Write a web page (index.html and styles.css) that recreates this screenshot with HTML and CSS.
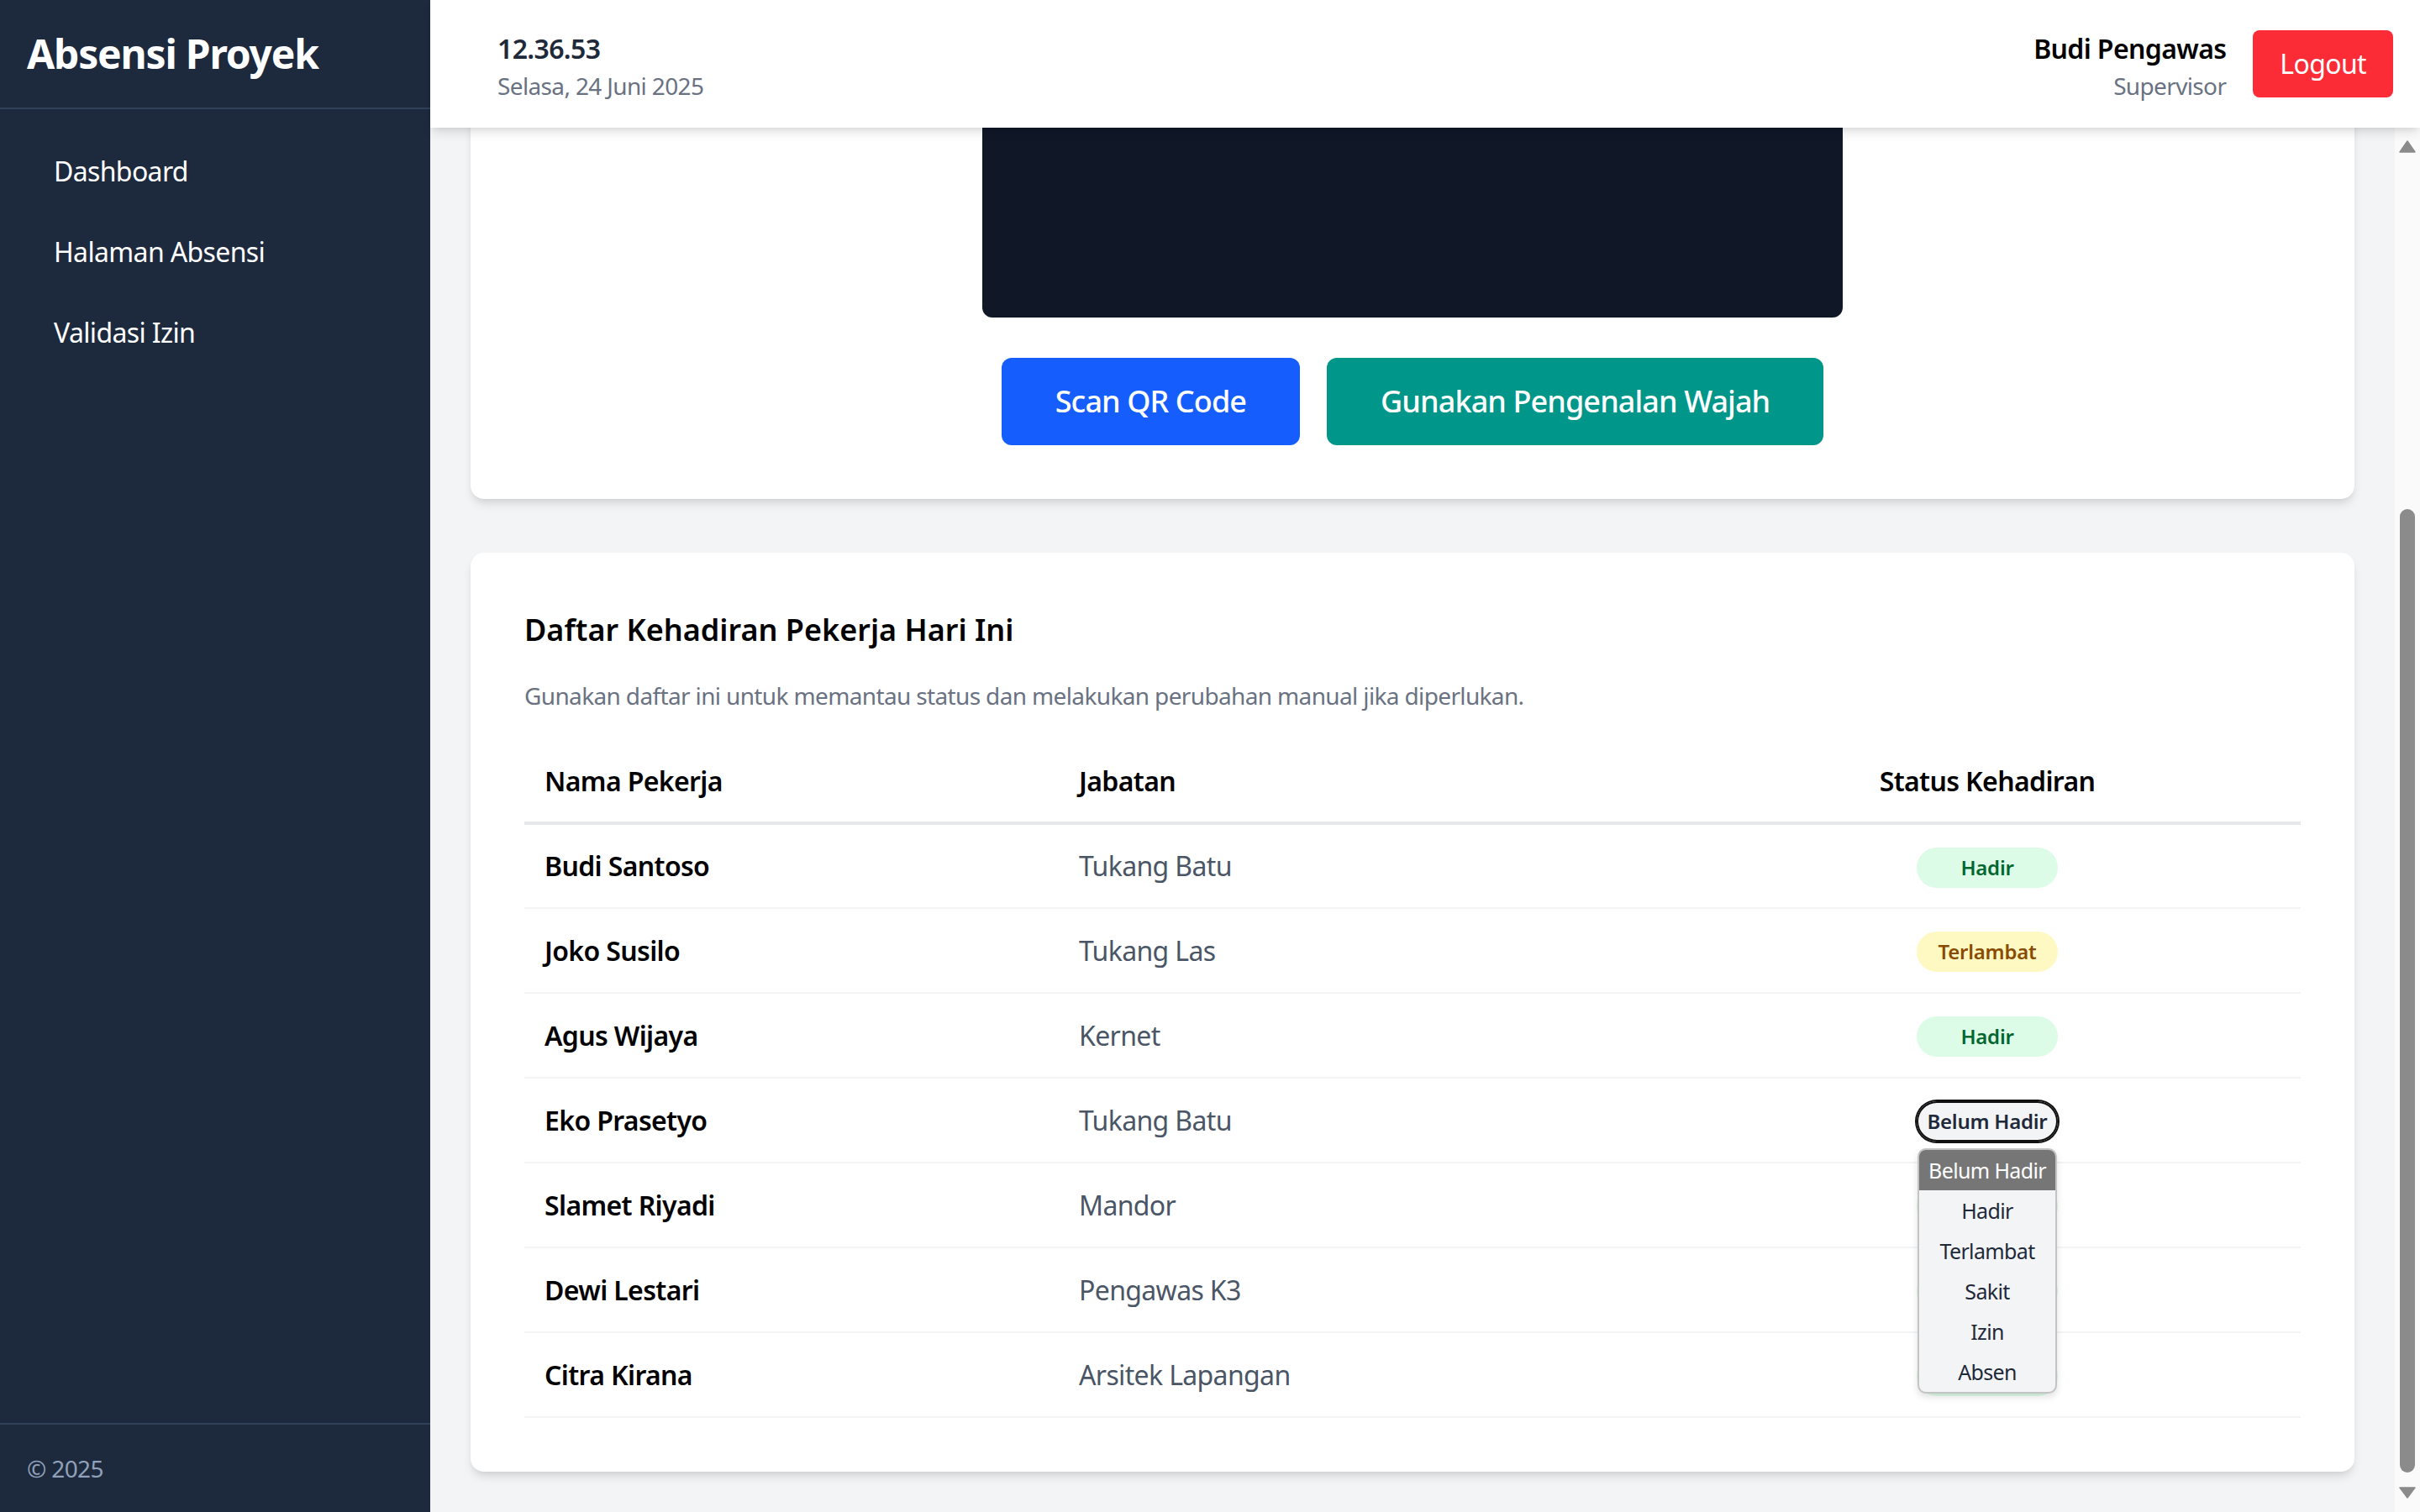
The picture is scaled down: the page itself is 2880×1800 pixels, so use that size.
FILE: index.html
```html
<!DOCTYPE html>
<html lang="id">
<head>
<meta charset="utf-8">
<title>Absensi Proyek</title>
<link rel="stylesheet" href="styles.css">
</head>
<body>
<div class="app">
  <aside class="sidebar">
    <div class="brand">Absensi Proyek</div>
    <nav class="nav">
      <a class="nav-link" href="#">Dashboard</a>
      <a class="nav-link" href="#">Halaman Absensi</a>
      <a class="nav-link" href="#">Validasi Izin</a>
    </nav>
    <div class="sidebar-footer">© 2025</div>
  </aside>
  <div class="content">
    <header class="topbar">
      <div class="clock">
        <div class="time">12.36.53</div>
        <div class="date">Selasa, 24 Juni 2025</div>
      </div>
      <div class="user">
        <div class="user-info">
          <div class="user-name">Budi Pengawas</div>
          <div class="user-role">Supervisor</div>
        </div>
        <button class="logout" type="button">Logout</button>
      </div>
    </header>
    <div class="viewport">
      <main class="main" id="main">
        <section class="card scan-card">
          <div class="camera"></div>
          <div class="actions">
            <button class="btn btn-blue" type="button">Scan QR Code</button>
            <button class="btn btn-teal" type="button">Gunakan Pengenalan Wajah</button>
          </div>
        </section>
        <section class="card list-card">
          <h2 class="card-title">Daftar Kehadiran Pekerja Hari Ini</h2>
          <p class="card-desc list-desc">Gunakan daftar ini untuk memantau status dan melakukan perubahan manual jika diperlukan.</p>
          <table class="table">
            <colgroup>
              <col class="col-name">
              <col class="col-role">
              <col class="col-status">
            </colgroup>
            <thead>
              <tr>
                <th>Nama Pekerja</th>
                <th>Jabatan</th>
                <th class="center">Status Kehadiran</th>
              </tr>
            </thead>
            <tbody>
              <tr>
                <td class="name">Budi Santoso</td>
                <td class="role">Tukang Batu</td>
                <td class="center"><span class="badge badge-green">Hadir</span></td>
              </tr>
              <tr>
                <td class="name">Joko Susilo</td>
                <td class="role">Tukang Las</td>
                <td class="center"><span class="badge badge-yellow">Terlambat</span></td>
              </tr>
              <tr>
                <td class="name">Agus Wijaya</td>
                <td class="role">Kernet</td>
                <td class="center"><span class="badge badge-green">Hadir</span></td>
              </tr>
              <tr>
                <td class="name">Eko Prasetyo</td>
                <td class="role">Tukang Batu</td>
                <td class="center">
                  <span class="select-wrap">
                    <span class="badge badge-gray focused">Belum Hadir</span>
                    <span class="popup">
                      <span class="option selected">Belum Hadir</span>
                      <span class="option">Hadir</span>
                      <span class="option">Terlambat</span>
                      <span class="option">Sakit</span>
                      <span class="option">Izin</span>
                      <span class="option">Absen</span>
                    </span>
                  </span>
                </td>
              </tr>
              <tr>
                <td class="name">Slamet Riyadi</td>
                <td class="role">Mandor</td>
                <td class="center"><span class="badge badge-green covered"><span class="badge-text">Hadir</span></span></td>
              </tr>
              <tr>
                <td class="name">Dewi Lestari</td>
                <td class="role">Pengawas K3</td>
                <td class="center"><span class="badge badge-green covered"><span class="badge-text">Hadir</span></span></td>
              </tr>
              <tr>
                <td class="name">Citra Kirana</td>
                <td class="role">Arsitek Lapangan</td>
                <td class="center"><span class="badge badge-green covered"><span class="badge-text">Hadir</span></span></td>
              </tr>
            </tbody>
          </table>
        </section>
      </main>
      <div class="scrollbar" aria-hidden="true">
        <span class="sb-btn sb-up">
          <svg width="30" height="34" viewBox="0 0 30 34"><path d="M6 29 L15 16 L24 29 Z" fill="#8b8b8b" stroke="#8b8b8b" stroke-width="1.5" stroke-linejoin="round"/></svg>
        </span>
        <span class="sb-track"><span class="sb-thumb"></span></span>
        <span class="sb-btn sb-down">
          <svg width="30" height="34" viewBox="0 0 30 34"><path d="M6 5 L15 17 L24 5 Z" fill="#8b8b8b" stroke="#8b8b8b" stroke-width="1.5" stroke-linejoin="round"/></svg>
        </span>
      </div>
    </div>
  </div>
</div>
<script src="script.js"></script>
</body>
</html>
```

FILE: styles.css
```css
* { box-sizing: border-box; }
html, body { margin: 0; padding: 0; height: 100%; }
body {
  font-family: "Noto Sans", "Open Sans", "DejaVu Sans", sans-serif;
  font-size: 32px;
  line-height: 48px;
  letter-spacing: -0.02em;
  color: #101828;
  overflow: hidden;
}
.app { display: flex; height: 100vh; }

/* Sidebar */
.sidebar {
  width: 512px;
  flex: none;
  background: #1d293d;
  color: #ffffff;
  display: flex;
  flex-direction: column;
}
.brand {
  padding: 32px;
  font-size: 48px;
  line-height: 64px;
  font-weight: 700;
  letter-spacing: -0.025em;
  border-bottom: 2px solid #314158;
}
.nav {
  flex: 1;
  padding: 34px 32px 32px;
  display: flex;
  flex-direction: column;
  gap: 16px;
}
.nav-link {
  display: block;
  padding: 16px 32px;
  color: #ffffff;
  text-decoration: none;
  font-size: 32px;
  line-height: 48px;
  border-radius: 12px;
}
.sidebar-footer {
  padding: 32px;
  border-top: 2px solid #314158;
  font-size: 28px;
  line-height: 40px;
  color: #90a1b9;
}

/* Content column */
.content {
  flex: 1;
  min-width: 0;
  display: flex;
  flex-direction: column;
  background: #f3f4f6;
}
.topbar {
  position: relative;
  z-index: 10;
  flex: none;
  background: #ffffff;
  display: flex;
  justify-content: space-between;
  align-items: center;
  padding: 34px 32px 30px 80px;
  box-shadow: 0 8px 12px -2px rgba(0,0,0,0.1), 0 4px 8px -4px rgba(0,0,0,0.1);
}
.time { font-size: 32px; line-height: 48px; font-weight: 600; color: #1e2939; }
.date { font-size: 28px; line-height: 40px; color: #6a7282; }
.user { display: flex; align-items: center; gap: 32px; }
.user-info { text-align: right; }
.user-name { font-size: 32px; line-height: 48px; font-weight: 600; color: #000000; }
.user-role { font-size: 28px; line-height: 40px; color: #6a7282; }
.logout {
  font-family: inherit;
  font-size: 32px;
  line-height: 48px;
  letter-spacing: -0.02em;
  color: #ffffff;
  background: #fb2c36;
  border: 0;
  border-radius: 8px;
  padding: 16px 32px;
  margin-top: -4px;
}

/* Scroll area with its scrollbar */
.viewport {
  flex: 1;
  min-height: 0;
  display: flex;
}
.main {
  flex: 1;
  min-width: 0;
  overflow: hidden;
  padding: 48px;
}
.scrollbar {
  flex: none;
  width: 30px;
  background: #fafafa;
  display: flex;
  flex-direction: column;
}
.sb-btn { display: block; height: 34px; flex: none; }
.sb-btn svg { display: block; }
.sb-track {
  flex: 1;
  display: flex;
  flex-direction: column;
  justify-content: flex-end;
  padding: 0 6px 13px;
}
.sb-thumb {
  display: block;
  height: 1147px;
  background: #8b8b8b;
  border-radius: 9px;
}

/* Cards */
.card {
  background: #ffffff;
  border-radius: 16px;
  padding: 64px;
  box-shadow: 0 8px 12px -2px rgba(0,0,0,0.1), 0 4px 8px -4px rgba(0,0,0,0.1);
}
.card + .card { margin-top: 64px; }
.card-title {
  margin: 0 0 30px;
  font-size: 36px;
  line-height: 56px;
  font-weight: 600;
  letter-spacing: 0;
  color: #000000;
}
.card-desc {
  margin: 0;
  font-size: 28px;
  line-height: 40px;
  color: #6a7282;
}
.list-desc { margin-bottom: 34px; }

.camera {
  width: 1024px;
  height: 576px;
  margin: 0 auto;
  background: #101828;
  border-radius: 12px;
}
.actions {
  display: flex;
  justify-content: center;
  gap: 32px;
  margin-top: 48px;
}
.btn {
  font-family: inherit;
  font-size: 36px;
  line-height: 56px;
  font-weight: 500;
  letter-spacing: -0.025em;
  color: #ffffff;
  border: 0;
  border-radius: 12px;
  padding: 24px 64px;
}
.btn-blue { background: #155dfc; }
.btn-teal { background: #009689; }

/* Table */
.table {
  width: 100%;
  border-collapse: collapse;
  table-layout: fixed;
}
.col-name { width: 636px; }
.col-role { width: 732px; }
.table th {
  text-align: left;
  padding: 24px;
  font-size: 32px;
  line-height: 48px;
  font-weight: 600;
  color: #000000;
  border-bottom: 4px solid #e5e7eb;
}
.table td {
  padding: 0 24px;
  height: 101px;
  vertical-align: middle;
  border-bottom: 2px solid #f3f4f6;
}
.table .center { text-align: center; }
.name { font-weight: 600; color: #000000; }
.role { color: #4a5565; }

.badge {
  display: inline-flex;
  align-items: center;
  justify-content: center;
  width: 168px;
  height: 48px;
  border-radius: 9999px;
  font-size: 24px;
  line-height: 32px;
  font-weight: 600;
  letter-spacing: -0.01em;
  vertical-align: middle;
}
.badge-green { background: #dcfce7; color: #016630; }
.badge-yellow { background: #fef9c2; color: #894b00; }
.badge-gray { background: #f3f4f6; color: #1e2939; }
.focused { box-shadow: 0 0 0 2px #101010, inset 0 0 0 2px #101010; }
.covered .badge-text { visibility: hidden; }

/* Open select list */
.select-wrap {
  position: relative;
  display: inline-block;
  vertical-align: middle;
  line-height: 0;
}
.popup {
  position: absolute;
  z-index: 5;
  top: 56px;
  left: 1px;
  width: 166px;
  display: flex;
  flex-direction: column;
  background: #f3f4f6;
  border: 2px solid #c4c4c4;
  border-radius: 10px;
  overflow: hidden;
  box-shadow: 0 4px 8px rgba(0,0,0,0.12);
}
.option {
  display: block;
  height: 48px;
  font-size: 25px;
  line-height: 48px;
  color: #1e2939;
  text-align: center;
  white-space: nowrap;
}
.option.selected { background: #767676; color: #ffffff; }
```

FILE: script.js
```js
var main = document.getElementById('main');
main.scrollTop = main.scrollHeight;
```
